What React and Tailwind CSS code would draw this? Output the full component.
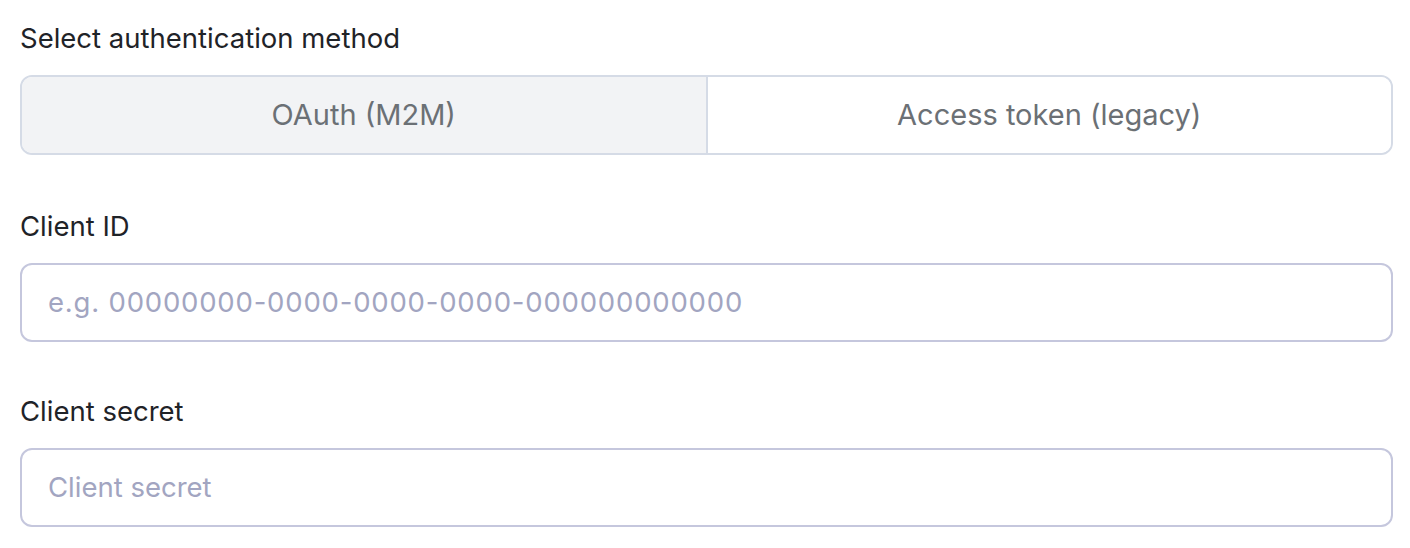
export default function App() {
  return (
    <div className="w-[1410px] h-[548px] bg-white pl-[20px] pr-[17px] pt-[20px]" style={{ fontFamily: "Inter, 'Noto Sans', sans-serif" }}>
      <div className="flex flex-col">
        <div className="text-[27.5px] leading-[36px] text-[#1f2328]">Select authentication method</div>
        <div className="mt-[19px] flex h-[80px] rounded-[12px] border-2 border-[#d5dbe6] overflow-hidden">
          <div className="flex-1 flex items-center justify-center bg-[#f2f3f5] border-r-2 border-[#d5dbe6] text-[29px] text-[#6b7075]">OAuth (M2M)</div>
          <div className="flex-1 flex items-center justify-center bg-white text-[29px] text-[#6b7075]">Access token (legacy)</div>
        </div>
        <div className="mt-[53px] text-[27.5px] leading-[36px] text-[#1f2328]">Client ID</div>
        <div className="mt-[19px] flex items-center h-[79px] rounded-[12px] border-2 border-[#c5c7dd] px-[26px] text-[27.5px] tracking-[0.8px] text-[#a2a5c1]">e.g. 00000000-0000-0000-0000-000000000000</div>
        <div className="mt-[51px] text-[27.5px] leading-[36px] text-[#1f2328]">Client secret</div>
        <div className="mt-[19px] flex items-center h-[79px] rounded-[12px] border-2 border-[#c5c7dd] px-[26px] text-[27.5px] text-[#a2a5c1]">Client secret</div>
      </div>
    </div>
  );
}
